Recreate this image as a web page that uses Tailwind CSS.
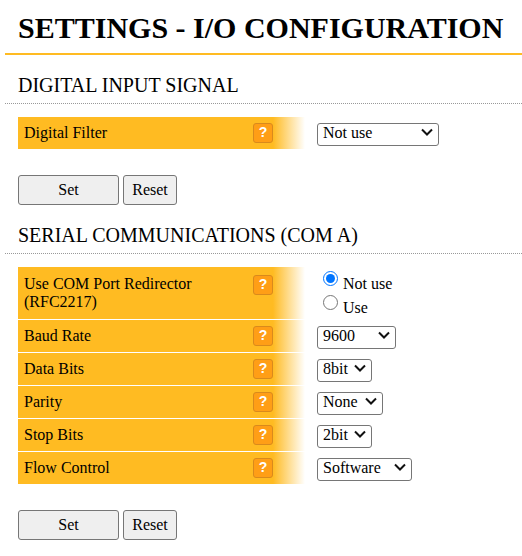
<!DOCTYPE html>
<html><head><meta charset="utf-8"><script src="https://cdn.jsdelivr.net/npm/@tailwindcss/browser@4"></script></head>
<body class="bg-white text-black font-['Liberation_Serif',serif] overflow-hidden">
<div class="w-[522px] h-[556px] pl-[5px]">
<h1 class="pl-[13px] pt-[10px] h-[55px] border-b-2 border-[#ffbb22] text-[30px] leading-[35px] font-bold whitespace-nowrap">SETTINGS - I/O CONFIGURATION</h1>
<h2 class="pl-[13px] pt-[19px] h-[49px] border-b border-dotted border-[#999] text-[20px] leading-[23px]">DIGITAL INPUT SIGNAL</h2>
<div class="ml-[13px] mt-[13px] flex flex-col">
<div class="flex items-start h-[32px]">
<div class="w-[287px] h-full pl-[6px] flex items-center bg-[linear-gradient(to_right,#ffbb22_0,#ffbb22_255px,#fff_287px)] text-[16px]"><span class="w-[229px]">Digital Filter</span><span class="w-5 h-5 rounded-[3px] border border-[#d98a1c] bg-[#ff9e16] text-white font-bold font-['Liberation_Sans',sans-serif] text-[14px] leading-[16px] text-center">?</span></div>
<div class="relative ml-[12px] mt-[4px] w-[122px] h-[23px]"><select class="appearance-none w-full h-full pl-[5px] pb-[2px] leading-[18px] bg-white border border-[#767676] rounded-[3px] text-[16px]"><option>Not use</option></select><svg class="absolute right-[6px] top-[7px] pointer-events-none" width="12" height="8" viewBox="0 0 12 8"><path d="M1 1.5l5 5 5-5" fill="none" stroke="#111" stroke-width="2"/></svg></div>
</div>
</div>
<div class="ml-[13px] mt-[26px] flex gap-[4px]">
<button class="w-[101px] h-[30px] bg-[#efefef] border border-[#767676] rounded-[3px] text-[16px]">Set</button>
<button class="w-[54px] h-[30px] bg-[#efefef] border border-[#767676] rounded-[3px] text-[16px]">Reset</button>
</div>
<h2 class="pl-[13px] pt-[19px] h-[49px] border-b border-dotted border-[#999] text-[20px] leading-[23px]">SERIAL COMMUNICATIONS (COM A)</h2>
<div class="ml-[13px] mt-[13px] flex flex-col gap-[1px]">
<div class="flex items-center h-[52px]">
<div class="w-[287px] h-full pl-[6px] flex items-center bg-[linear-gradient(to_right,#ffbb22_0,#ffbb22_255px,#fff_287px)] text-[16px] leading-[18px]"><span class="w-[229px] pr-[30px]">Use COM Port Redirector (RFC2217)</span><span class="w-5 h-5 rounded-[3px] border border-[#d98a1c] bg-[#ff9e16] text-white font-bold font-['Liberation_Sans',sans-serif] text-[14px] leading-[16px] text-center -mt-[16px]">?</span></div>
<div class="ml-[18px] mt-[2px] flex flex-col gap-[1px] text-[16px] leading-[21px]">
<label class="flex items-start gap-[5px] h-[23px]"><input type="radio" name="r" checked class="w-[15px] h-[15px] m-0 appearance-auto"><span class="mt-[2px]">Not use</span></label>
<label class="flex items-start gap-[5px] h-[23px]"><input type="radio" name="r" class="w-[15px] h-[15px] m-0 appearance-auto"><span class="mt-[2px]">Use</span></label>
</div>
</div>
<div class="flex items-start h-[32px]">
<div class="w-[287px] h-full pl-[6px] flex items-center bg-[linear-gradient(to_right,#ffbb22_0,#ffbb22_255px,#fff_287px)] text-[16px]"><span class="w-[229px]">Baud Rate</span><span class="w-5 h-5 rounded-[3px] border border-[#d98a1c] bg-[#ff9e16] text-white font-bold font-['Liberation_Sans',sans-serif] text-[14px] leading-[16px] text-center">?</span></div>
<div class="relative ml-[12px] mt-[4px] w-[79px] h-[23px]"><select class="appearance-none w-full h-full pl-[5px] pb-[2px] leading-[18px] bg-white border border-[#767676] rounded-[3px] text-[16px]"><option>9600</option></select><svg class="absolute right-[6px] top-[7px] pointer-events-none" width="12" height="8" viewBox="0 0 12 8"><path d="M1 1.5l5 5 5-5" fill="none" stroke="#111" stroke-width="2"/></svg></div>
</div>
<div class="flex items-start h-[32px]">
<div class="w-[287px] h-full pl-[6px] flex items-center bg-[linear-gradient(to_right,#ffbb22_0,#ffbb22_255px,#fff_287px)] text-[16px]"><span class="w-[229px]">Data Bits</span><span class="w-5 h-5 rounded-[3px] border border-[#d98a1c] bg-[#ff9e16] text-white font-bold font-['Liberation_Sans',sans-serif] text-[14px] leading-[16px] text-center">?</span></div>
<div class="relative ml-[12px] mt-[4px] w-[55px] h-[23px]"><select class="appearance-none w-full h-full pl-[5px] pb-[2px] leading-[18px] bg-white border border-[#767676] rounded-[3px] text-[16px]"><option>8bit</option></select><svg class="absolute right-[6px] top-[7px] pointer-events-none" width="12" height="8" viewBox="0 0 12 8"><path d="M1 1.5l5 5 5-5" fill="none" stroke="#111" stroke-width="2"/></svg></div>
</div>
<div class="flex items-start h-[32px]">
<div class="w-[287px] h-full pl-[6px] flex items-center bg-[linear-gradient(to_right,#ffbb22_0,#ffbb22_255px,#fff_287px)] text-[16px]"><span class="w-[229px]">Parity</span><span class="w-5 h-5 rounded-[3px] border border-[#d98a1c] bg-[#ff9e16] text-white font-bold font-['Liberation_Sans',sans-serif] text-[14px] leading-[16px] text-center">?</span></div>
<div class="relative ml-[12px] mt-[4px] w-[66px] h-[23px]"><select class="appearance-none w-full h-full pl-[5px] pb-[2px] leading-[18px] bg-white border border-[#767676] rounded-[3px] text-[16px]"><option>None</option></select><svg class="absolute right-[6px] top-[7px] pointer-events-none" width="12" height="8" viewBox="0 0 12 8"><path d="M1 1.5l5 5 5-5" fill="none" stroke="#111" stroke-width="2"/></svg></div>
</div>
<div class="flex items-start h-[32px]">
<div class="w-[287px] h-full pl-[6px] flex items-center bg-[linear-gradient(to_right,#ffbb22_0,#ffbb22_255px,#fff_287px)] text-[16px]"><span class="w-[229px]">Stop Bits</span><span class="w-5 h-5 rounded-[3px] border border-[#d98a1c] bg-[#ff9e16] text-white font-bold font-['Liberation_Sans',sans-serif] text-[14px] leading-[16px] text-center">?</span></div>
<div class="relative ml-[12px] mt-[4px] w-[55px] h-[23px]"><select class="appearance-none w-full h-full pl-[5px] pb-[2px] leading-[18px] bg-white border border-[#767676] rounded-[3px] text-[16px]"><option>2bit</option></select><svg class="absolute right-[6px] top-[7px] pointer-events-none" width="12" height="8" viewBox="0 0 12 8"><path d="M1 1.5l5 5 5-5" fill="none" stroke="#111" stroke-width="2"/></svg></div>
</div>
<div class="flex items-start h-[32px]">
<div class="w-[287px] h-full pl-[6px] flex items-center bg-[linear-gradient(to_right,#ffbb22_0,#ffbb22_255px,#fff_287px)] text-[16px]"><span class="w-[229px]">Flow Control</span><span class="w-5 h-5 rounded-[3px] border border-[#d98a1c] bg-[#ff9e16] text-white font-bold font-['Liberation_Sans',sans-serif] text-[14px] leading-[16px] text-center">?</span></div>
<div class="relative ml-[12px] mt-[4px] w-[95px] h-[23px]"><select class="appearance-none w-full h-full pl-[5px] pb-[2px] leading-[18px] bg-white border border-[#767676] rounded-[3px] text-[16px]"><option>Software</option></select><svg class="absolute right-[6px] top-[7px] pointer-events-none" width="12" height="8" viewBox="0 0 12 8"><path d="M1 1.5l5 5 5-5" fill="none" stroke="#111" stroke-width="2"/></svg></div>
</div>
</div>
<div class="ml-[13px] mt-[26px] flex gap-[4px]">
<button class="w-[101px] h-[30px] bg-[#efefef] border border-[#767676] rounded-[3px] text-[16px]">Set</button>
<button class="w-[54px] h-[30px] bg-[#efefef] border border-[#767676] rounded-[3px] text-[16px]">Reset</button>
</div>
</div>
</body></html>
